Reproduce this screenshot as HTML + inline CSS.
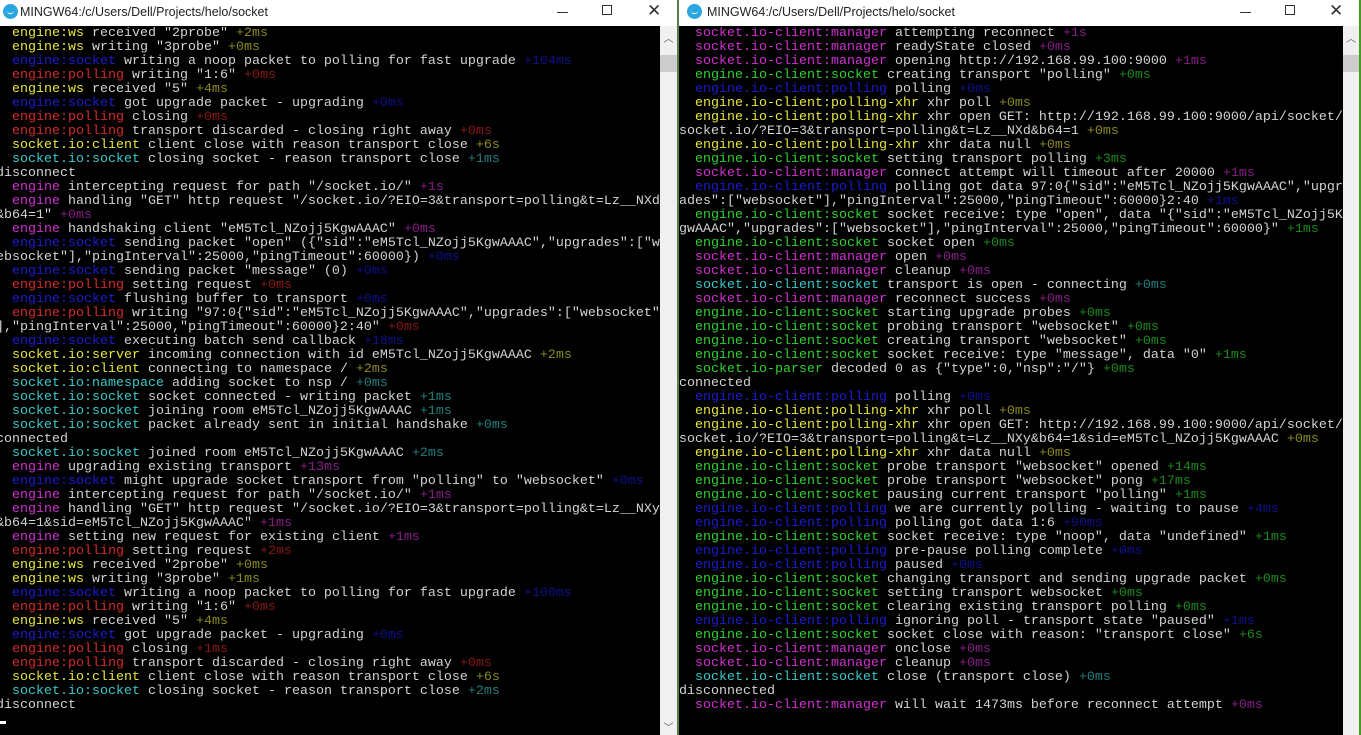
<!DOCTYPE html>
<html><head><meta charset="utf-8"><style>
*{margin:0;padding:0;box-sizing:border-box}
body{width:1361px;height:735px;overflow:hidden;background:#000;position:relative;font-family:"Liberation Mono",monospace}
.tb{position:absolute;top:0;height:26px;background:#fff;font-family:"Liberation Sans",sans-serif;font-size:12.5px;color:#222}
.tb .ic{position:absolute;top:4px;width:15px;height:15px;border-radius:50%;background:#2aa7e0}
.tb .ic:after{content:"";position:absolute;left:4px;top:6px;width:7px;height:3px;border-bottom:1.5px solid #fff;border-radius:0 0 3px 3px}
.tb .t{position:absolute;top:5px}
.mn{position:absolute;top:12px;width:11px;height:1px;background:#333}
.mx{position:absolute;top:5px;width:10px;height:10px;border:1px solid #333}
.cl{position:absolute;top:1px;font-size:17px;color:#333;font-family:"DejaVu Sans",sans-serif;font-weight:200}
.term{position:absolute;top:27px;height:708px;overflow:hidden;white-space:pre;font-size:13.33px;line-height:14px;color:#d2d2d2}
.sb{position:absolute;top:26px;height:709px;background:#f0f0f0}
.sb .up{position:absolute;top:4px;left:0;width:100%;text-align:center;font-size:10px;color:#606060;font-family:"DejaVu Sans",sans-serif}
.sb .th{position:absolute;top:29px;left:0;width:100%;height:17px;background:#cdcdcd}
.y{color:#e6e63c}.yd{color:#8a8a22}
.b{color:#1c1cd0}.bd{color:#10108a}
.r{color:#d42a2a}.rd{color:#8a1818}
.c{color:#3ac8c8}.cd{color:#227f7f}
.m{color:#d030d0}.md{color:#861c86}
.g{color:#30d030}.gd{color:#1c8a1c}
</style></head><body>
<div class="tb" style="left:0;width:677px"><div class="ic" style="left:3px"></div><div class="t" style="left:20px">MINGW64:/c/Users/Dell/Projects/helo/socket</div><div class="mn" style="left:557px"></div><div class="mx" style="left:602px"></div><div class="cl" style="left:647px">✕</div></div>
<div style="position:absolute;left:677px;top:0;width:2px;height:735px;background:#5a7a50"></div>
<div class="tb" style="left:679px;width:680px"><div class="ic" style="left:8px"></div><div class="t" style="left:28px">MINGW64:/c/Users/Dell/Projects/helo/socket</div><div class="mn" style="left:561px"></div><div class="mx" style="left:606px"></div><div class="cl" style="left:650px">✕</div></div>
<div style="position:absolute;left:1359px;top:0;width:2px;height:735px;background:#4a9a2a"></div>
<div class="sb" style="left:660px;width:17px"><div class="up">︿</div><div class="th"></div><div class="up" style="top:693px">﹀</div></div>
<div class="sb" style="left:1343px;width:16px"><div class="up">︿</div><div class="th"></div></div>
<div class="term" style="left:-4px;width:664px">  <span class="y">engine:ws</span> received "2probe" <span class="yd">+2ms</span>
  <span class="y">engine:ws</span> writing "3probe" <span class="yd">+0ms</span>
  <span class="b">engine:socket</span> writing a noop packet to polling for fast upgrade <span class="bd">+104ms</span>
  <span class="r">engine:polling</span> writing "1:6" <span class="rd">+0ms</span>
  <span class="y">engine:ws</span> received "5" <span class="yd">+4ms</span>
  <span class="b">engine:socket</span> got upgrade packet - upgrading <span class="bd">+0ms</span>
  <span class="r">engine:polling</span> closing <span class="rd">+0ms</span>
  <span class="r">engine:polling</span> transport discarded - closing right away <span class="rd">+0ms</span>
  <span class="y">socket.io:client</span> client close with reason transport close <span class="yd">+6s</span>
  <span class="c">socket.io:socket</span> closing socket - reason transport close <span class="cd">+1ms</span>
disconnect
  <span class="m">engine</span> intercepting request for path "/socket.io/" <span class="md">+1s</span>
  <span class="m">engine</span> handling "GET" http request "/socket.io/?EIO=3&amp;transport=polling&amp;t=Lz__NXd
&amp;b64=1" <span class="md">+0ms</span>
  <span class="m">engine</span> handshaking client "eM5Tcl_NZojj5KgwAAAC" <span class="md">+0ms</span>
  <span class="b">engine:socket</span> sending packet "open" ({"sid":"eM5Tcl_NZojj5KgwAAAC","upgrades":["w
ebsocket"],"pingInterval":25000,"pingTimeout":60000}) <span class="bd">+0ms</span>
  <span class="b">engine:socket</span> sending packet "message" (0) <span class="bd">+0ms</span>
  <span class="r">engine:polling</span> setting request <span class="rd">+0ms</span>
  <span class="b">engine:socket</span> flushing buffer to transport <span class="bd">+0ms</span>
  <span class="r">engine:polling</span> writing "97:0{"sid":"eM5Tcl_NZojj5KgwAAAC","upgrades":["websocket"
],"pingInterval":25000,"pingTimeout":60000}2:40" <span class="rd">+0ms</span>
  <span class="b">engine:socket</span> executing batch send callback <span class="bd">+18ms</span>
  <span class="y">socket.io:server</span> incoming connection with id eM5Tcl_NZojj5KgwAAAC <span class="yd">+2ms</span>
  <span class="y">socket.io:client</span> connecting to namespace / <span class="yd">+2ms</span>
  <span class="c">socket.io:namespace</span> adding socket to nsp / <span class="cd">+0ms</span>
  <span class="c">socket.io:socket</span> socket connected - writing packet <span class="cd">+1ms</span>
  <span class="c">socket.io:socket</span> joining room eM5Tcl_NZojj5KgwAAAC <span class="cd">+1ms</span>
  <span class="c">socket.io:socket</span> packet already sent in initial handshake <span class="cd">+0ms</span>
connected
  <span class="c">socket.io:socket</span> joined room eM5Tcl_NZojj5KgwAAAC <span class="cd">+2ms</span>
  <span class="m">engine</span> upgrading existing transport <span class="md">+13ms</span>
  <span class="b">engine:socket</span> might upgrade socket transport from "polling" to "websocket" <span class="bd">+0ms</span>
  <span class="m">engine</span> intercepting request for path "/socket.io/" <span class="md">+1ms</span>
  <span class="m">engine</span> handling "GET" http request "/socket.io/?EIO=3&amp;transport=polling&amp;t=Lz__NXy
&amp;b64=1&amp;sid=eM5Tcl_NZojj5KgwAAAC" <span class="md">+1ms</span>
  <span class="m">engine</span> setting new request for existing client <span class="md">+1ms</span>
  <span class="r">engine:polling</span> setting request <span class="rd">+2ms</span>
  <span class="y">engine:ws</span> received "2probe" <span class="yd">+0ms</span>
  <span class="y">engine:ws</span> writing "3probe" <span class="yd">+1ms</span>
  <span class="b">engine:socket</span> writing a noop packet to polling for fast upgrade <span class="bd">+100ms</span>
  <span class="r">engine:polling</span> writing "1:6" <span class="rd">+0ms</span>
  <span class="y">engine:ws</span> received "5" <span class="yd">+4ms</span>
  <span class="b">engine:socket</span> got upgrade packet - upgrading <span class="bd">+0ms</span>
  <span class="r">engine:polling</span> closing <span class="rd">+1ms</span>
  <span class="r">engine:polling</span> transport discarded - closing right away <span class="rd">+0ms</span>
  <span class="y">socket.io:client</span> client close with reason transport close <span class="yd">+6s</span>
  <span class="c">socket.io:socket</span> closing socket - reason transport close <span class="cd">+2ms</span>
disconnect</div>
<div style="position:absolute;left:0;top:721px;width:6px;height:3px;background:#fff"></div>
<div class="term" style="left:679px;width:664px">  <span class="m">socket.io-client:manager</span> attempting reconnect <span class="md">+1s</span>
  <span class="m">socket.io-client:manager</span> readyState closed <span class="md">+0ms</span>
  <span class="m">socket.io-client:manager</span> opening http://192.168.99.100:9000 <span class="md">+1ms</span>
  <span class="g">engine.io-client:socket</span> creating transport "polling" <span class="gd">+0ms</span>
  <span class="b">engine.io-client:polling</span> polling <span class="bd">+0ms</span>
  <span class="y">engine.io-client:polling-xhr</span> xhr poll <span class="yd">+0ms</span>
  <span class="y">engine.io-client:polling-xhr</span> xhr open GET: http://192.168.99.100:9000/api/socket/
socket.io/?EIO=3&amp;transport=polling&amp;t=Lz__NXd&amp;b64=1 <span class="yd">+0ms</span>
  <span class="y">engine.io-client:polling-xhr</span> xhr data null <span class="yd">+0ms</span>
  <span class="g">engine.io-client:socket</span> setting transport polling <span class="gd">+3ms</span>
  <span class="m">socket.io-client:manager</span> connect attempt will timeout after 20000 <span class="md">+1ms</span>
  <span class="b">engine.io-client:polling</span> polling got data 97:0{"sid":"eM5Tcl_NZojj5KgwAAAC","upgr
ades":["websocket"],"pingInterval":25000,"pingTimeout":60000}2:40 <span class="bd">+1ms</span>
  <span class="g">engine.io-client:socket</span> socket receive: type "open", data "{"sid":"eM5Tcl_NZojj5K
gwAAAC","upgrades":["websocket"],"pingInterval":25000,"pingTimeout":60000}" <span class="gd">+1ms</span>
  <span class="g">engine.io-client:socket</span> socket open <span class="gd">+0ms</span>
  <span class="m">socket.io-client:manager</span> open <span class="md">+0ms</span>
  <span class="m">socket.io-client:manager</span> cleanup <span class="md">+0ms</span>
  <span class="c">socket.io-client:socket</span> transport is open - connecting <span class="cd">+0ms</span>
  <span class="m">socket.io-client:manager</span> reconnect success <span class="md">+0ms</span>
  <span class="g">engine.io-client:socket</span> starting upgrade probes <span class="gd">+0ms</span>
  <span class="g">engine.io-client:socket</span> probing transport "websocket" <span class="gd">+0ms</span>
  <span class="g">engine.io-client:socket</span> creating transport "websocket" <span class="gd">+0ms</span>
  <span class="g">engine.io-client:socket</span> socket receive: type "message", data "0" <span class="gd">+1ms</span>
  <span class="g">socket.io-parser</span> decoded 0 as {"type":0,"nsp":"/"} <span class="gd">+0ms</span>
connected
  <span class="b">engine.io-client:polling</span> polling <span class="bd">+0ms</span>
  <span class="y">engine.io-client:polling-xhr</span> xhr poll <span class="yd">+0ms</span>
  <span class="y">engine.io-client:polling-xhr</span> xhr open GET: http://192.168.99.100:9000/api/socket/
socket.io/?EIO=3&amp;transport=polling&amp;t=Lz__NXy&amp;b64=1&amp;sid=eM5Tcl_NZojj5KgwAAAC <span class="yd">+0ms</span>
  <span class="y">engine.io-client:polling-xhr</span> xhr data null <span class="yd">+0ms</span>
  <span class="g">engine.io-client:socket</span> probe transport "websocket" opened <span class="gd">+14ms</span>
  <span class="g">engine.io-client:socket</span> probe transport "websocket" pong <span class="gd">+17ms</span>
  <span class="g">engine.io-client:socket</span> pausing current transport "polling" <span class="gd">+1ms</span>
  <span class="b">engine.io-client:polling</span> we are currently polling - waiting to pause <span class="bd">+4ms</span>
  <span class="b">engine.io-client:polling</span> polling got data 1:6 <span class="bd">+90ms</span>
  <span class="g">engine.io-client:socket</span> socket receive: type "noop", data "undefined" <span class="gd">+1ms</span>
  <span class="b">engine.io-client:polling</span> pre-pause polling complete <span class="bd">+0ms</span>
  <span class="b">engine.io-client:polling</span> paused <span class="bd">+0ms</span>
  <span class="g">engine.io-client:socket</span> changing transport and sending upgrade packet <span class="gd">+0ms</span>
  <span class="g">engine.io-client:socket</span> setting transport websocket <span class="gd">+0ms</span>
  <span class="g">engine.io-client:socket</span> clearing existing transport polling <span class="gd">+0ms</span>
  <span class="b">engine.io-client:polling</span> ignoring poll - transport state "paused" <span class="bd">+1ms</span>
  <span class="g">engine.io-client:socket</span> socket close with reason: "transport close" <span class="gd">+6s</span>
  <span class="m">socket.io-client:manager</span> onclose <span class="md">+0ms</span>
  <span class="m">socket.io-client:manager</span> cleanup <span class="md">+0ms</span>
  <span class="c">socket.io-client:socket</span> close (transport close) <span class="cd">+0ms</span>
disconnected
  <span class="m">socket.io-client:manager</span> will wait 1473ms before reconnect attempt <span class="md">+0ms</span></div>
</body></html>
